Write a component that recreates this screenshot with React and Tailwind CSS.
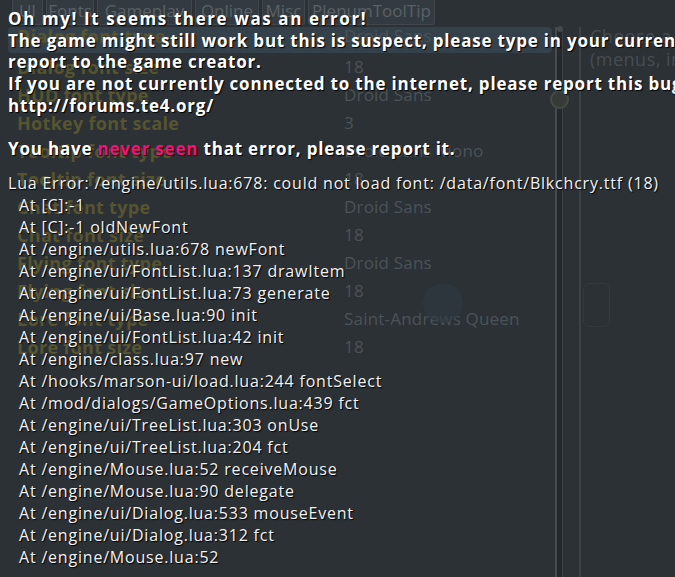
import React from 'react';

const TABS = [
  ['UI', 'w-[31px]'],
  ['Fonts', 'w-[48px]'],
  ['Gameplay', 'w-[95px]'],
  ['Online', 'w-[64px]'],
  ['Misc', 'w-[43px]'],
  ['PlenumToolTip', 'w-[127px]'],
];

const ROWS = [
  ['Dialog font type', 'Droid Sans'],
  ['Dialog font size', '18'],
  ['HUD font type', 'Droid Sans'],
  ['Hotkey font scale', '3'],
  ['Tooltip font type', 'Droid Sans Mono'],
  ['Tooltip font size', '18'],
  ['Chat font type', 'Droid Sans'],
  ['Chat font size', '18'],
  ['Flying font type', 'Droid Sans'],
  ['Flying font size', '18'],
  ['Lore font type', 'Saint-Andrews Queen'],
  ['Lore font size', '18'],
];

const STACK = [
  'At [C]:-1',
  'At [C]:-1 oldNewFont',
  'At /engine/utils.lua:678 newFont',
  'At /engine/ui/FontList.lua:137 drawItem',
  'At /engine/ui/FontList.lua:73 generate',
  'At /engine/ui/Base.lua:90 init',
  'At /engine/ui/FontList.lua:42 init',
  'At /engine/class.lua:97 new',
  'At /hooks/marson-ui/load.lua:244 fontSelect',
  'At /mod/dialogs/GameOptions.lua:439 fct',
  'At /engine/ui/TreeList.lua:303 onUse',
  'At /engine/ui/TreeList.lua:204 fct',
  'At /engine/Mouse.lua:52 receiveMouse',
  'At /engine/Mouse.lua:90 delegate',
  'At /engine/ui/Dialog.lua:533 mouseEvent',
  'At /engine/ui/Dialog.lua:312 fct',
  'At /engine/Mouse.lua:52',
];

const font = { fontFamily: '"Open Sans", "Noto Sans", sans-serif' };

// the game options dialog, dimmed behind the error
function OptionsBehind() {
  return (
    <div className="flex flex-col whitespace-nowrap">
      <div className="flex gap-[3px] pl-[12px] h-[25px]">
        {TABS.map(([t, w]) => (
          <div key={t} className={`${w} shrink-0 flex items-end justify-center pb-[3px] bg-[#343b40] border border-t-0 border-[#41484d] rounded-b-[3px] text-[#5a6166] text-[17px] leading-[20px]`}>
            {t}
          </div>
        ))}
      </div>

      <div className="flex mt-[2px]">
        <div className="w-[552px] shrink-0 pl-[8px]">
          {ROWS.map(([label, val], i) => (
            <div key={label}
              className={`flex items-center ${i === 0 ? 'h-[26px] bg-[#35414a] rounded-[4px]' : 'h-[28px]'}`}>
              <div className={`w-[336px] shrink-0 pl-[9px] text-[18px] font-bold tracking-[0.3px] text-[#57542f] ${i === 0 ? '-translate-y-[4px]' : ''}`}>{label}</div>
              <div className={`text-[17px] tracking-[0.2px] text-[#4c5358] ${i === 0 ? '-translate-y-[4px]' : ''}`}>{val}</div>
            </div>
          ))}
        </div>

        {/* scrollbar */}
        <div className="relative w-[36px] shrink-0 flex pl-[3px]">
          <div className="w-[8px] h-[560px] border-l-2 border-r border-l-[#454b4f] border-r-[#3b4145] bg-[#23292d]" />
          <div className="w-[16px]" />
          <div className="w-[2px] h-[560px] bg-[#3c4245]" />
          <div className="absolute left-[-2px] top-[63px] w-[19px] h-[19px] rounded-full border-2 border-[#474a43] bg-[#363a39]" />
          <div className="absolute left-[5px] top-[-1px] w-[6px] h-[6px] rounded-full bg-[#43494d]" />
        </div>

        <div className="pl-[2px] text-[18px] leading-[23px] tracking-[0.5px] text-[#464d52] -translate-y-[2px]">
          <div>Choose a font for the</div>
          <div>(menus, inventory, ...)</div>
        </div>
      </div>
    </div>
  );
}

export default function App() {
  const shadow = '[text-shadow:1px_1px_1px_#000]';
  return (
    <div className="relative w-[675px] h-[577px] overflow-hidden bg-[#2b3135]" style={font}>
      <OptionsBehind />

      <div className="absolute left-[423px] top-[283px] w-[40px] h-[40px] rounded-full bg-[#2f3a42] opacity-60" />
      <div className="absolute left-[583px] top-[283px] w-[27px] h-[44px] rounded-[6px] border border-[#323a3f]" />

      {/* error overlay */}
      <div className="absolute inset-0 pl-[8px] pt-[8px] whitespace-nowrap">
        <div className={`text-[17px] leading-[21.7px] font-bold tracking-[0.8px] text-white ${shadow}`}>
          <div className="tracking-[1.6px]">Oh my! It seems there was an error!</div>
          <div>The game might still work but this is suspect, please type in your current situation and send the</div>
          <div>report to the game creator.</div>
          <div>If you are not currently connected to the internet, please report this bug when you can, but you can still</div>
          <div>http://forums.te4.org/</div>
          <div className="h-[21.7px]" />
          <div>You have <span className="text-[#f2137c]">never seen</span> that error, please report it.</div>
        </div>

        <div className={`mt-[12px] text-[16px] leading-[22px] tracking-[0.8px] text-[#f2f2f2] ${shadow}`}>
          <div>Lua Error: /engine/utils.lua:678: could not load font: /data/font/Blkchcry.ttf (18)</div>
          {STACK.map((s, i) => (
            <div key={i} className="pl-[11px]">{s}</div>
          ))}
        </div>
      </div>
    </div>
  );
}
